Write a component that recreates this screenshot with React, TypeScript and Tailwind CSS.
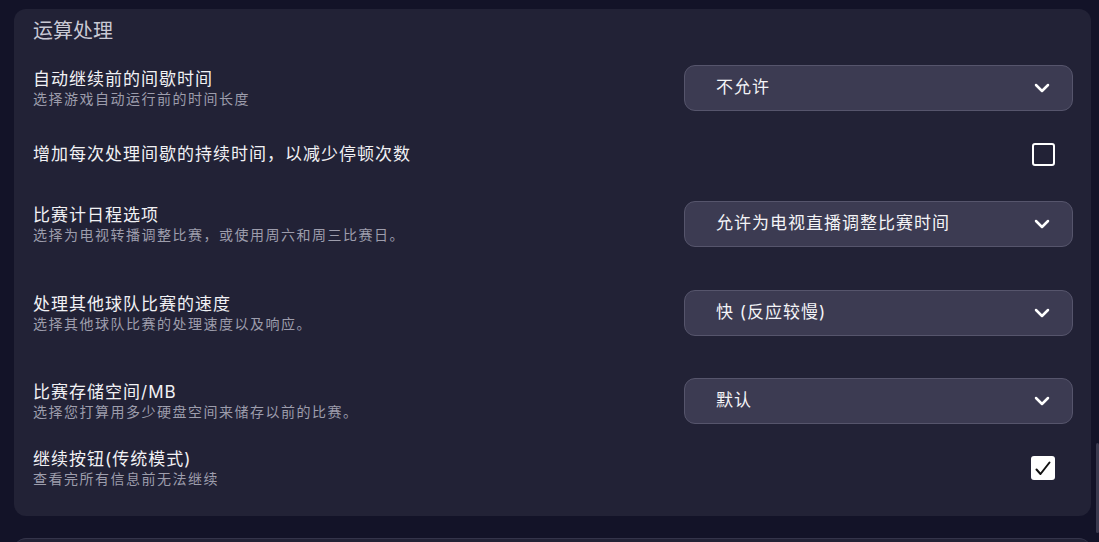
import React from 'react';

type Row =
  | { kind: 'select'; label: string; desc?: string; value: string; mt: string }
  | { kind: 'check'; label: string; desc?: string; checked: boolean; mt: string };

const rows: Row[] = [
  { kind: 'select', label: '自动继续前的间歇时间', desc: '选择游戏自动运行前的时间长度', value: '不允许', mt: 'mt-[20px]' },
  { kind: 'check', label: '增加每次处理间歇的持续时间，以减少停顿次数', checked: false, mt: 'mt-[20px]' },
  { kind: 'select', label: '比赛计日程选项', desc: '选择为电视转播调整比赛，或使用周六和周三比赛日。', value: '允许为电视直播调整比赛时间', mt: 'mt-[24px]' },
  { kind: 'select', label: '处理其他球队比赛的速度', desc: '选择其他球队比赛的处理速度以及响应。', value: '快 (反应较慢)', mt: 'mt-[43px]' },
  { kind: 'select', label: '比赛存储空间/MB', desc: '选择您打算用多少硬盘空间来储存以前的比赛。', value: '默认', mt: 'mt-[42px]' },
  { kind: 'check', label: '继续按钮(传统模式)', desc: '查看完所有信息前无法继续', checked: true, mt: 'mt-[21px]' },
];

const Chevron = () => (
  <svg width="16" height="10" viewBox="0 0 16 10" fill="none">
    <polyline points="2,2 8,8 14,2" stroke="#ffffff" strokeWidth="2.5" strokeLinecap="round" strokeLinejoin="round" />
  </svg>
);

const Select: React.FC<{ value: string }> = ({ value }) => (
  <div className="w-[389px] h-[46px] rounded-[11px] bg-[#3c3b52] border-[1.5px] border-[#56556c] flex items-center justify-between pl-[31px] pr-[22px]">
    <span className="text-[17px] tracking-[1px] text-[#f4f4f7]">{value}</span>
    <Chevron />
  </div>
);

const Checkbox: React.FC<{ checked: boolean }> = ({ checked }) => (
  <div className="w-[389px] flex justify-end pr-[18px]">
    {checked ? (
      <div className="w-[24px] h-[24px] rounded-[3px] bg-white">
        <svg width="24" height="24" viewBox="0 0 24 24" fill="none">
          <path d="M5.5 13.5 L9.5 18 L18.5 6.5" stroke="#111111" strokeWidth="2" strokeLinecap="round" strokeLinejoin="round" />
        </svg>
      </div>
    ) : (
      <div className="w-[23px] h-[23px] rounded-[3px] border-2 border-white" />
    )}
  </div>
);

export default function App() {
  return (
    <div
      className="relative h-[542px] overflow-hidden bg-[#131328] pt-[9px] px-[14px]"
      style={{ fontFamily: 'Inter, "Noto Sans CJK SC", sans-serif' }}
    >
      <div className="w-[1077px] rounded-[12px] bg-[#222236] pt-[8px] pb-[25px] pl-[19px] pr-[18px]">
        <h2 className="text-[20px] leading-[28px] text-[#c9c9d4]">运算处理</h2>
        {rows.map((row) => (
          <div key={row.label} className={`${row.mt} h-[46px] flex items-center justify-between`}>
            <div className="flex flex-col">
              <span className="text-[17px] leading-[22px] tracking-[1px] text-[#f1f1f4]">{row.label}</span>
              {row.desc && (
                <span className="text-[14px] leading-[18px] tracking-[1.5px] text-[#9d9dac]">{row.desc}</span>
              )}
            </div>
            {row.kind === 'select' ? <Select value={row.value} /> : <Checkbox checked={row.checked} />}
          </div>
        ))}
      </div>
      <div className="mt-[22px] w-[1077px] h-[60px] rounded-[12px] bg-[#222236] border-t border-[#34344a]" />
      <div className="absolute right-0 top-[443px] w-[3px] h-[90px] rounded-full bg-[#3a3a4f]" />
    </div>
  );
}
